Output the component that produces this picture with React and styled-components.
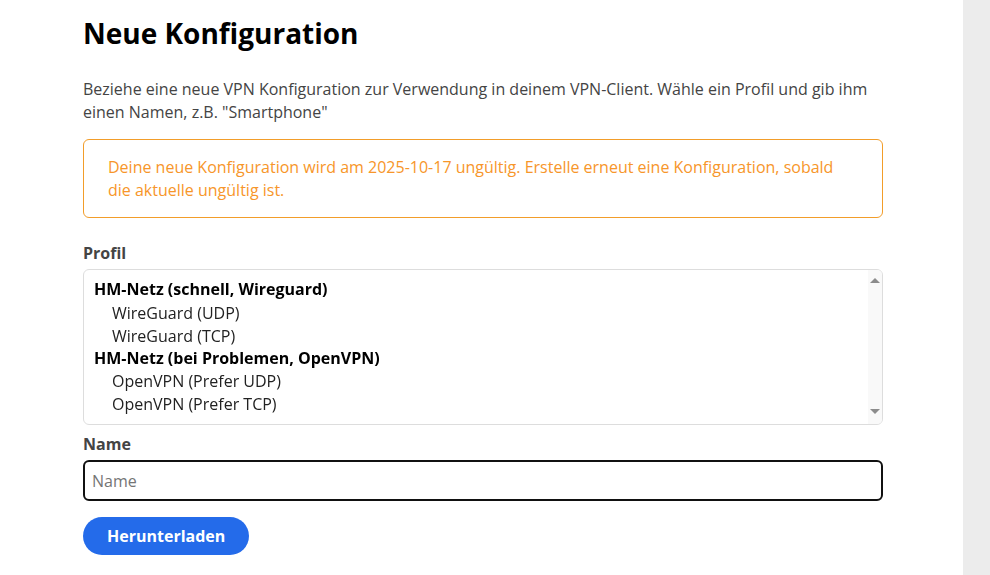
import React from 'react';
import styled, { createGlobalStyle } from 'styled-components';

const GlobalStyle = createGlobalStyle`
	html, body {
		margin: 0;
		padding: 0;
		background: #ffffff;
		font-family: "Open Sans", "Liberation Sans", sans-serif;
	}
`;

const Page = styled.div`
	display: flex;
	min-height: 575px;
`;

const Main = styled.main`
	flex: 1;
	padding: 14px 0 20px 83px;
`;

const Side = styled.aside`
	width: 27px;
	background: #ececec;
`;

const Content = styled.div`
	width: 800px;
	display: flex;
	flex-direction: column;
`;

const Title = styled.h1`
	margin: 0 0 26px;
	font-size: 28px;
	font-weight: 700;
	line-height: 38px;
	color: #000;
`;

const Intro = styled.p`
	margin: 0 0 15px;
	font-size: 16px;
	line-height: 23px;
	color: #444;
`;

const Alert = styled.div`
	border: 1px solid #f29d2a;
	border-radius: 6px;
	padding: 16px 24px;
	font-size: 16px;
	line-height: 22.5px;
	color: #f7962a;
	margin-bottom: 24px;
`;

const Label = styled.label`
	display: block;
	font-size: 16px;
	font-weight: 700;
	line-height: 22px;
	color: #444;
	margin-bottom: 5px;
`;

const SelectWrap = styled.div`
	position: relative;
	margin-bottom: 8px;
`;

const Select = styled.select`
	display: block;
	box-sizing: border-box;
	width: 100%;
	height: 156px;
	border: 1px solid #ddd;
	border-radius: 6px;
	padding: 8px 16px 4px 0;
	font-family: "Open Sans", "Liberation Sans", sans-serif;
	font-size: 16px;
	color: #111;
	background: #fff;
	outline: none;

	optgroup {
		font-weight: 700;
		color: #000;
		padding-left: 8px;
	}

	option {
		font-weight: 400;
		color: #222;
		padding: 0.75px 0 0 20px;
	}
`;

const ScrollTrack = styled.div`
	position: absolute;
	top: 1px;
	right: 1px;
	bottom: 1px;
	width: 14px;
	background: #f9f9f9;
	border-radius: 0 5px 5px 0;
	display: flex;
	flex-direction: column;
	justify-content: space-between;
	align-items: center;
	padding: 8px 0 10px;
	box-sizing: border-box;
	pointer-events: none;
`;

const Arrow = styled.span`
	width: 0;
	height: 0;
	border-left: 5px solid transparent;
	border-right: 5px solid transparent;
	${(p) => (p.$down ? 'border-top: 5px solid #8c8c8c;' : 'border-bottom: 5px solid #8c8c8c;')}
`;

const Input = styled.input`
	box-sizing: border-box;
	width: 100%;
	height: 41px;
	border: 2px solid #111;
	border-radius: 6px;
	padding: 0 7px;
	font-family: "Open Sans", "Liberation Sans", sans-serif;
	font-size: 16px;
	color: #222;
	outline: none;
	margin-bottom: 16px;

	::placeholder {
		color: #7a7a7a;
	}
`;

const Button = styled.button`
	align-self: flex-start;
	height: 38px;
	padding: 0 24px;
	border: none;
	border-radius: 19px;
	background: #246bea;
	color: #fff;
	font-family: "Open Sans", "Liberation Sans", sans-serif;
	font-size: 16px;
	font-weight: 700;
	cursor: pointer;
`;

const profiles = [
	{ group: 'HM-Netz (schnell, Wireguard)', options: ['WireGuard (UDP)', 'WireGuard (TCP)'] },
	{ group: 'HM-Netz (bei Problemen, OpenVPN)', options: ['OpenVPN (Prefer UDP)', 'OpenVPN (Prefer TCP)'] },
];

function App() {
	return (
		<Page>
			<GlobalStyle />
			<Main>
				<Content>
					<Title>Neue Konfiguration</Title>
					<Intro>
						Beziehe eine neue VPN Konfiguration zur Verwendung in deinem VPN-Client. Wähle ein Profil und gib ihm
						einen Namen, z.B. "Smartphone"
					</Intro>
					<Alert>
						Deine neue Konfiguration wird am 2025-10-17 ungültig. Erstelle erneut eine Konfiguration, sobald die
						aktuelle ungültig ist.
					</Alert>
					<Label htmlFor="profile">Profil</Label>
					<SelectWrap>
						<Select id="profile" size={6}>
							{profiles.map((p) => (
								<optgroup key={p.group} label={p.group}>
									{p.options.map((o) => (
										<option key={o}>{o}</option>
									))}
								</optgroup>
							))}
						</Select>
						<ScrollTrack>
							<Arrow />
							<Arrow $down />
						</ScrollTrack>
					</SelectWrap>
					<Label htmlFor="name">Name</Label>
					<Input id="name" placeholder="Name" autoFocus />
					<Button>Herunterladen</Button>
				</Content>
			</Main>
			<Side />
		</Page>
	);
}

export default App;
